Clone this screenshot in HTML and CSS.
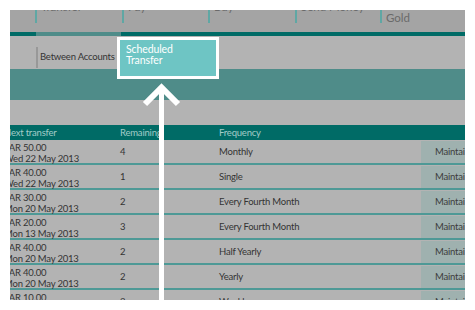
FILE: index.html
```html
<!DOCTYPE html>
<html lang="en">
<head>
    <meta charset="UTF-8">
    <title>Scheduled Transfer</title>
    <link rel="stylesheet" href="styles.css">
</head>
<body>
    <div class="frame">
        <div class="topnav">
            <div class="tab"><span class="tab-label">Transfer</span></div>
            <div class="tab"><span class="tab-label">Pay</span></div>
            <div class="tab"><span class="tab-label">Buy</span></div>
            <div class="tab"><span class="tab-label">Send Money</span></div>
            <div class="tab"><span class="tab-label tab-gold">Gold</span></div>
        </div>
        <div class="tabline"><div class="tabline-active"></div></div>
        <div class="subnav">
            <div class="subnav-item">Between Accounts</div>
        </div>
        <div class="band"></div>
        <div class="gap"></div>
        <div class="table">
            <div class="thead">
                <div>Next transfer</div>
                <div>Remaining</div>
                <div>Frequency</div>
                <div></div>
            </div>
            <div class="row">
                <div class="cell-date">SAR 50.00<br>Wed 22 May 2013</div>
                <div class="cell">4</div>
                <div class="cell">Monthly</div>
                <div class="btn">Maintain</div>
            </div>
            <div class="row">
                <div class="cell-date">SAR 40.00<br>Wed 22 May 2013</div>
                <div class="cell">1</div>
                <div class="cell">Single</div>
                <div class="btn">Maintain</div>
            </div>
            <div class="row">
                <div class="cell-date">SAR 30.00<br>Mon 20 May 2013</div>
                <div class="cell">2</div>
                <div class="cell">Every Fourth Month</div>
                <div class="btn">Maintain</div>
            </div>
            <div class="row">
                <div class="cell-date">SAR 20.00<br>Mon 13 May 2013</div>
                <div class="cell">3</div>
                <div class="cell">Every Fourth Month</div>
                <div class="btn">Maintain</div>
            </div>
            <div class="row">
                <div class="cell-date">SAR 40.00<br>Mon 20 May 2013</div>
                <div class="cell">2</div>
                <div class="cell">Half Yearly</div>
                <div class="btn">Maintain</div>
            </div>
            <div class="row">
                <div class="cell-date">SAR 40.00<br>Mon 20 May 2013</div>
                <div class="cell">2</div>
                <div class="cell">Yearly</div>
                <div class="btn">Maintain</div>
            </div>
            <div class="row">
                <div class="cell-date">SAR 10.00<br>Mon 20 May 2013</div>
                <div class="cell">2</div>
                <div class="cell">Weekly</div>
                <div class="btn">Maintain</div>
            </div>
        </div>

        <div class="highlight">Scheduled<br>Transfer</div>

        <svg class="arrow" width="455" height="290" viewBox="0 0 455 290">
            <rect x="149" y="76" width="5" height="220" fill="#fff"/>
            <polyline points="135,94 151.5,77.5 168,94" fill="none" stroke="#fff" stroke-width="6"/>
        </svg>
    </div>
</body>
</html>
```

FILE: styles.css
```css
body {
    margin: 0;
    background-color: #fff;
    font-family: 'Lato', 'Liberation Sans', sans-serif;
}
.frame {
    position: relative;
    margin: 10px;
    width: 455px;
    height: 290px;
    overflow: hidden;
    background-color: #b3b3b3;
}
.topnav {
    display: grid;
    grid-template-columns: 87px 86px 87px 85px 1fr;
    padding-left: 25px;
    height: 22px;
    background-color: #a4a4a4;
}
.tab {
    border-left: 2px solid #5fa7a4;
    height: 13px;
    padding-left: 4px;
    color: #6a6a6a;
    font-size: 11.5px;
    line-height: 14px;
}
.tab-label {
    display: block;
    margin-top: -10px;
}
.tab-gold {
    margin-top: 1px;
}
.tabline {
    height: 4px;
    background-color: #006b66;
}
.tabline-active {
    margin-left: 26px;
    width: 85px;
    height: 4px;
    background-color: #4f8c89;
}
.subnav {
    height: 33px;
    padding-left: 26px;
    background-color: #b3b3b3;
}
.subnav-item {
    display: inline-block;
    margin-top: 11px;
    height: 21px;
    line-height: 19px;
    padding-left: 2px;
    border-left: 2px solid #989898;
    color: #333;
    font-size: 9.5px;
    letter-spacing: -0.2px;
}
.band {
    height: 31px;
    background-color: #4f8c89;
}
.gap {
    height: 25px;
}
.table {
    margin-left: -6px;
    font-size: 9.5px;
    letter-spacing: -0.2px;
    color: #333;
}
.thead, .row {
    display: grid;
    grid-template-columns: 116px 99px 202px 52px;
}
.thead {
    height: 15px;
    line-height: 15px;
    background-color: #006b66;
    color: #a3cbc8;
}
.row {
    height: 23px;
    border-bottom: 2px solid #4e9996;
}
.cell-date {
    padding-top: 2px;
    line-height: 11px;
}
.cell {
    line-height: 23px;
}
.btn {
    margin-top: 1px;
    height: 22px;
    line-height: 22px;
    padding-left: 14px;
    background-color: #9fb1af;
    color: #3c3c3c;
    white-space: nowrap;
}
.highlight {
    position: absolute;
    left: 107px;
    top: 27px;
    width: 84px;
    height: 28px;
    padding: 4px 6px;
    border: 3px solid #fff;
    background-color: #6ec5c4;
    color: #fff;
    font-size: 10.5px;
    letter-spacing: -0.1px;
    line-height: 10.5px;
}
.arrow {
    position: absolute;
    left: 0;
    top: 0;
}
```
